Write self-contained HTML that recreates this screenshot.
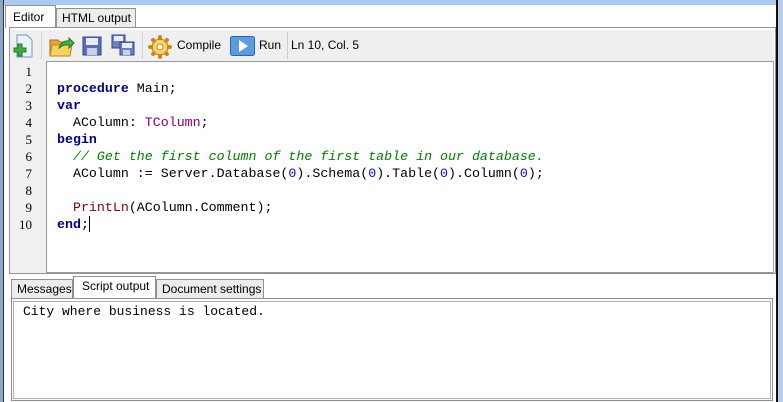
<!DOCTYPE html>
<html><head><meta charset="utf-8"><style>
*{margin:0;padding:0;box-sizing:border-box}
body{width:783px;height:402px;overflow:hidden;background:#fff;position:relative;font-family:"Liberation Sans",sans-serif;font-size:12px;color:#000}
.a{position:absolute;white-space:nowrap}
.tab{position:absolute;border:1px solid #919191;border-bottom:none;background:#ececec;font-size:12px;padding-left:6px;line-height:18px;white-space:nowrap;overflow:hidden}
.code{font-family:"Liberation Mono",monospace;font-size:13.3px;line-height:17px;white-space:pre}
.k{color:#00008b;font-weight:bold}.t{color:#800080}.c{color:#008000;font-style:italic}.n{color:#0000ff}.f{color:#8b0000}
.ln{font-family:"Liberation Serif",serif;font-size:13px;line-height:17px;text-align:right}
</style></head><body>
<div class="a" style="left:0;top:0;width:783px;height:5px;background:#a9c9ee"></div>
<div class="a" style="left:0;top:0;width:4px;height:402px;background:#8aa6c8;border-right:1px solid #333"></div>
<div class="a" style="left:776px;top:0;width:2px;height:402px;background:#111"></div>
<div class="a" style="left:778px;top:0;width:5px;height:402px;background:#b8cde6"></div>
<div class="tab" style="left:56px;top:8px;width:80px;height:20px;padding-left:5px">HTML output</div>
<div class="tab" style="left:5px;top:5px;width:51px;height:23px;background:#fff;line-height:22px;padding-left:7px">Editor</div>
<div class="a" style="left:9px;top:27px;width:767px;height:247px;border:1px solid #919191;border-bottom:none;background:#fff"></div>
<div class="a" style="left:10px;top:30px;width:764px;height:31px;background:#efefef"></div>
<div class="a" style="left:41px;top:32px;width:1px;height:27px;background:#ccc"></div>
<div class="a" style="left:142px;top:32px;width:1px;height:27px;background:#ccc"></div>
<div class="a" style="left:287px;top:32px;width:1px;height:27px;background:#ccc"></div>
<svg class="a" style="left:12px;top:34px" width="22" height="24"><path d="M5 1h10l5 5v17H5z" fill="#eaf3fb" stroke="#6b9ac8"/><path d="M2 14h4v-4h4v4h4v4h-4v4H6v-4H2z" fill="#3fb13f" stroke="#1e7a1e"/></svg>
<svg class="a" style="left:49px;top:34px" width="26" height="24"><path d="M1 6h8l2 2h10v14H1z" fill="#e7a92c" stroke="#a9701a"/><path d="M3 11h20l-2 11H1z" fill="#f7d35e" stroke="#b9841d"/><path d="M10 14q3-8 10-7v-3l5 5-5 5v-3q-5-1-10 3z" fill="#3db43a" stroke="#217a1f"/></svg>
<svg class="a" style="left:82px;top:36px" width="20" height="20"><rect x="1" y="1" width="18" height="18" fill="#5a6fb8" stroke="#34448a"/><rect x="4" y="2" width="12" height="7" fill="#e8ecf6"/><rect x="5" y="12" width="10" height="7" fill="#c9d0e6"/></svg>
<svg class="a" style="left:111px;top:34px" width="24" height="22"><rect x="1" y="1" width="13" height="13" fill="#6f80c0" stroke="#34448a"/><rect x="3" y="2" width="9" height="5" fill="#e8ecf6"/><rect x="9" y="8" width="14" height="13" fill="#6f80c0" stroke="#34448a"/><rect x="11" y="9" width="10" height="5" fill="#e8ecf6"/><rect x="12" y="16" width="7" height="5" fill="#c9d0e6"/></svg>
<svg class="a" style="left:148px;top:35px" width="24" height="24"><circle cx="12" cy="12" r="8" fill="#fbd65c" stroke="#c08a20"/><g stroke="#c08a20" stroke-width="4" stroke-linecap="round"><path d="M12 2v3M12 19v3M2 12h3M19 12h3M5 5l2 2M17 17l2 2M19 5l-2 2M5 19l2-2"/></g><circle cx="12" cy="12" r="7" fill="#fbd65c"/><circle cx="12" cy="12" r="3" fill="#fff" stroke="#c08a20"/></svg>
<div class="a" style="left:177px;top:38px">Compile</div>
<svg class="a" style="left:230px;top:36px" width="25" height="20"><rect x="0.5" y="0.5" width="24" height="19" rx="2" fill="#5d9be0" stroke="#2a64b8"/><path d="M9 4l9 6-9 6z" fill="#fff"/></svg>
<div class="a" style="left:259px;top:38px">Run</div>
<div class="a" style="left:291px;top:38px">Ln 10, Col. 5</div>
<div class="a" style="left:10px;top:61px;width:36px;height:212px;background:#f0f0f0"></div>
<div class="a" style="left:46px;top:61px;width:728px;height:212px;border:1px solid #9a9a9a;border-right-color:#aaa;background:#fff"></div>
<div class="a ln" style="left:10px;top:63px;width:22px">1<br>2<br>3<br>4<br>5<br>6<br>7<br>8<br>9<br>10</div>
<div class="a code" style="left:57px;top:63px"> 
<span class="k">procedure</span> Main;
<span class="k">var</span>
  AColumn: <span class="t">TColumn</span>;
<span class="k">begin</span>
  <span class="c">// Get the first column of the first table in our database.</span>
  AColumn := Server.Database(<span class="n">0</span>).Schema(<span class="n">0</span>).Table(<span class="n">0</span>).Column(<span class="n">0</span>);

  <span class="f">PrintLn</span>(AColumn.Comment);
<span class="k">end</span>;</div>
<div class="a" style="left:89px;top:216px;width:1px;height:16px;background:#000"></div>
<div class="a" style="left:9px;top:273px;width:767px;height:1px;background:#919191"></div>
<div class="tab" style="left:11px;top:279px;width:62px;height:19px;padding-left:5px">Messages</div>
<div class="tab" style="left:156px;top:279px;width:108px;height:19px;padding-left:5px">Document settings</div>
<div class="tab" style="left:73px;top:276px;width:83px;height:23px;background:#fff;line-height:19px;padding-left:8px">Script output</div>
<div class="a" style="left:11px;top:298px;width:762px;height:103px;border:1px solid #8e8e95;background:#fff"></div>
<div class="a" style="left:13px;top:301px;width:758px;height:98px;border:1px solid #b0b0b0"></div>
<div class="a code" style="left:23px;top:303px;font-size:13px">City where business is located.</div>
</body></html>
